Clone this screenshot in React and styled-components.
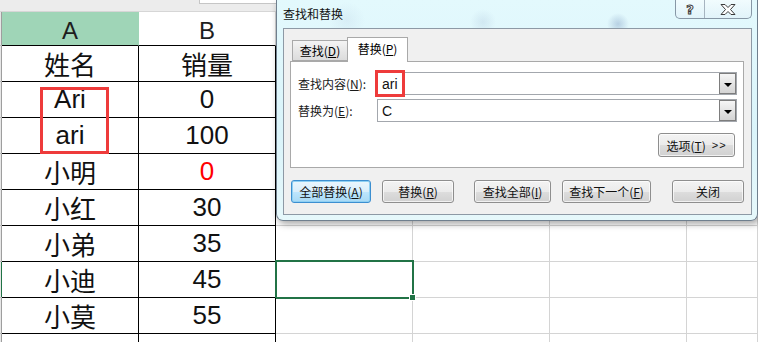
import styled, { createGlobalStyle } from "styled-components";

const GlobalStyle = createGlobalStyle`
  html, body {
    margin: 0;
    padding: 0;
    background: #ffffff;
    overflow: hidden;
  }
`;

const FONT = `"Liberation Sans", "Noto Sans CJK SC", sans-serif`;
const UI_FONT = `"Noto Sans CJK SC", "Liberation Sans", sans-serif`;

const Page = styled.div`
  position: relative;
  width: 758px;
  height: 342px;
  overflow: hidden;
  background: #ffffff;
  font-family: ${FONT};
`;

const TopStrip = styled.div`
  height: 12px;
  display: flex;
  background: #ececec;
  border-bottom: 1px solid #d6d6d6;
  box-sizing: border-box;

  .nameEdge {
    width: 199px;
  }
  .formula {
    flex: 1;
    height: 3px;
    background: #ffffff;
    border: 1px solid #c6c6c6;
    border-top: none;
  }
`;

const Sheet = styled.div`
  display: grid;
  grid-template-columns: 2px repeat(5, 137px) 1fr;
  grid-template-rows: 34px;
  grid-auto-rows: 36px;
`;

const RowHead = styled.div`
  background: #e6e6e6;
  border-bottom: 1px solid #bdbdbd;
  box-shadow: inset -1px 0 0 ${(p) => (p.$active ? "#217346" : "#9e9e9e")};
`;

const ColHead = styled.div`
  display: flex;
  align-items: center;
  justify-content: center;
  padding-top: 4px;
  box-sizing: border-box;
  font-size: 24px;
  color: #1e1e1e;
  background: ${(p) => (p.$selected ? "#9fd5b7" : "#ffffff")};
  border-right: 1px solid ${(p) => (p.$selected ? "#9fd5b7" : "#d4d4d4")};
  border-bottom: 1px solid ${(p) => (p.$table ? "#000000" : "#d4d4d4")};
`;

const Cell = styled.div`
  position: relative;
  display: flex;
  align-items: center;
  justify-content: center;
  font-size: 26px;
  color: ${(p) => (p.$red ? "#ff0000" : "#111111")};
  border-right: 1px solid ${(p) => (p.$table ? "#000000" : "#d4d4d4")};
  border-bottom: 1px solid ${(p) => (p.$table ? "#000000" : "#d4d4d4")};

  ${(p) =>
    p.$current &&
    `
    &::after {
      content: "";
      position: absolute;
      top: -2px;
      left: -1px;
      right: -2px;
      bottom: -2px;
      border: 2px solid #217346;
    }
    &::before {
      content: "";
      position: absolute;
      right: -4px;
      bottom: -4px;
      width: 5px;
      height: 5px;
      background: #217346;
      border: 1px solid #ffffff;
      z-index: 1;
    }
  `}
`;

const Mark = styled.div`
  position: absolute;
  left: ${(p) => p.$x}px;
  top: ${(p) => p.$y}px;
  width: ${(p) => p.$w}px;
  height: ${(p) => p.$h}px;
  border: 3px solid #ee3b3b;
  box-sizing: border-box;
  z-index: 5;
`;

const Dialog = styled.div`
  position: absolute;
  left: 276px;
  top: 0;
  width: 482px;
  height: 221px;
  box-sizing: border-box;
  padding: 0 5px 5px 6px;
  display: flex;
  flex-direction: column;
  font-family: ${UI_FONT};
  font-size: 12px;
  color: #000000;
  border: 1px solid #6f7f8e;
  border-top: none;
  border-radius: 0 0 7px 7px;
  background:
    radial-gradient(circle at 341px 24px, rgba(120, 150, 190, 0.4) 0, rgba(120, 150, 190, 0) 11px),
    radial-gradient(circle at 206px 22px, rgba(150, 175, 205, 0.22) 0, rgba(150, 175, 205, 0) 13px),
    radial-gradient(circle at 70px 20px, rgba(170, 190, 215, 0.18) 0, rgba(170, 190, 215, 0) 18px),
    linear-gradient(180deg, #e3f9fd 0%, #daf4fa 60%, #e6f8fb 100%);
  box-shadow: 2px 3px 7px rgba(0, 0, 0, 0.35);
  z-index: 3;
`;

const TitleBar = styled.div`
  height: 28px;
  display: flex;
  align-items: center;
  padding-bottom: 1px;
  box-sizing: border-box;
  font-size: 12px;
  color: #111111;
`;

const Caption = styled.div`
  position: absolute;
  right: 5px;
  top: 0;
  display: flex;
  height: 18px;
  border: 1px solid #8797a6;
  border-top: none;
  border-radius: 0 0 5px 5px;
  background: linear-gradient(180deg, rgba(255, 255, 255, 0.5), rgba(225, 240, 248, 0.6));
  overflow: hidden;
`;

const CaptionButton = styled.div`
  width: ${(p) => p.$w}px;
  display: flex;
  align-items: center;
  justify-content: center;
  & + & {
    border-left: 1px solid #a6b4c0;
  }
`;

const HelpGlyph = styled.span`
  font-family: "DejaVu Sans", sans-serif;
  font-weight: bold;
  font-size: 13px;
  color: #ffffff;
  -webkit-text-stroke: 1px #3b3b3b;
  line-height: 1;
`;

const Client = styled.div`
  flex: 1;
  display: flex;
  flex-direction: column;
  background: #f0f0f0;
  border: 1px solid #8d99a5;
`;

const TabStrip = styled.div`
  display: flex;
  align-items: flex-end;
  height: 24px;
  margin: 8px 0 0 8px;
  position: relative;
  z-index: 1;
`;

const Tab = styled.div`
  box-sizing: border-box;
  display: flex;
  align-items: center;
  justify-content: center;
  width: ${(p) => (p.$active ? 61 : 56)}px;
  height: ${(p) => (p.$active ? 25 : 21)}px;
  margin-bottom: ${(p) => (p.$active ? -1 : 0)}px;
  margin-left: ${(p) => (p.$active ? -1 : 0)}px;
  padding-bottom: ${(p) => (p.$active ? 3 : 0)}px;
  border: 1px solid #a9a9a9;
  border-bottom: ${(p) => (p.$active ? "none" : "1px solid #a9a9a9")};
  background: ${(p) =>
    p.$active ? "#ffffff" : "linear-gradient(180deg, #f4f4f4 0%, #e6e6e6 55%, #dcdcdc 100%)"};
  font-size: 12px;
`;

const Panel = styled.div`
  height: 107px;
  box-sizing: border-box;
  margin: 0 7px 0 6px;
  padding: 10px 7px 0 7px;
  background: #ffffff;
  border: 1px solid #a9a9a9;
`;

const Form = styled.div`
  display: grid;
  grid-template-columns: 79px 360px;
  grid-auto-rows: 23px;
  row-gap: 4px;
  align-items: center;
`;

const Label = styled.div`
  font-size: 12px;
  color: #1a1a1a;
`;

const Field = styled.div`
  height: 23px;
  box-sizing: border-box;
  display: flex;
  align-items: center;
  border: 1px solid #a3a7ad;
  background: #ffffff;

  .value {
    flex: 1;
    padding-left: 4px;
    font-family: ${FONT};
    font-size: 14px;
    color: #111111;
  }
`;

const DropButton = styled.div`
  width: 17px;
  height: 21px;
  box-sizing: border-box;
  display: flex;
  align-items: center;
  justify-content: center;
  border: 1px solid #7d7d7d;
  background: linear-gradient(180deg, #f6f6f6 0%, #e4e4e4 50%, #d4d4d4 100%);

  &::after {
    content: "";
    border-left: 4px solid transparent;
    border-right: 4px solid transparent;
    border-top: 4px solid #000000;
    margin-top: 2px;
  }
`;

const OptionRow = styled.div`
  display: flex;
  justify-content: flex-end;
  margin-top: 11px;
  padding-right: 1px;
`;

const ButtonRow = styled.div`
  display: flex;
  margin: 12px 0 0 7px;
`;

const Button = styled.div`
  width: ${(p) => p.$w}px;
  height: ${(p) => p.$h || 23}px;
  margin-left: ${(p) => p.$ml || 0}px;
  box-sizing: border-box;
  display: flex;
  align-items: center;
  justify-content: center;
  font-size: 12px;
  color: #111111;
  border-radius: 3px;
  border: 1px solid ${(p) => (p.$focus ? "#3c8fd0" : "#8e8e8e")};
  background: ${(p) =>
    p.$focus
      ? "linear-gradient(180deg, #eaf6fd 0%, #d9eefb 50%, #bee6fd 51%, #a7d9f5 100%)"
      : "linear-gradient(180deg, #f3f3f3 0%, #ebebeb 50%, #dddddd 51%, #d1d1d1 100%)"};
  box-shadow: ${(p) =>
    p.$focus ? "inset 0 0 0 1px #8fd0f3" : "inset 0 0 0 1px rgba(255,255,255,0.7)"};

  .extra {
    font-family: ${FONT};
    font-size: 11px;
    margin-left: 6px;
    letter-spacing: 1px;
  }
`;

const rows = [
  { name: "姓名", value: "销量" },
  { name: "Ari", value: "0" },
  { name: "ari", value: "100" },
  { name: "小明", value: "0", red: true },
  { name: "小红", value: "30" },
  { name: "小弟", value: "35" },
  { name: "小迪", value: "45", active: true },
  { name: "小莫", value: "55" },
];

function CloseGlyph() {
  return (
    <svg width="18" height="11" viewBox="0 0 18 11">
      <path
        d="M2 0.5 H6 L9 3.5 L12 0.5 H16 L11.5 5.5 L16 10.5 H12 L9 7.5 L6 10.5 H2 L6.5 5.5 Z"
        fill="#ffffff"
        stroke="#3b3b3b"
        strokeWidth="1"
        strokeLinejoin="round"
      />
    </svg>
  );
}

function Row({ row }) {
  return (
    <>
      <RowHead $active={row.active} />
      <Cell $table>{row.name}</Cell>
      <Cell $table $red={row.red}>
        {row.value}
      </Cell>
      <Cell $current={row.active} />
      <Cell />
      <Cell />
      <Cell />
    </>
  );
}

export default function App() {
  return (
    <Page>
      <GlobalStyle />
      <TopStrip>
        <div className="nameEdge" />
        <div className="formula" />
      </TopStrip>
      <Sheet>
        <RowHead />
        <ColHead $selected $table>
          A
        </ColHead>
        <ColHead $table>B</ColHead>
        {/* C to F headers sit under the dialog */}
        <ColHead />
        <ColHead />
        <ColHead />
        <ColHead />
        {rows.map((row) => (
          <Row key={row.name} row={row} />
        ))}
        <Row row={{ name: "", value: "" }} />
      </Sheet>

      <Mark $x={40} $y={87} $w={69} $h={67} />

      <Dialog>
        <TitleBar>查找和替换</TitleBar>
        <Caption>
          <CaptionButton $w={28}>
            <HelpGlyph>?</HelpGlyph>
          </CaptionButton>
          <CaptionButton $w={46}>
            <CloseGlyph />
          </CaptionButton>
        </Caption>
        <Client>
          <TabStrip>
            <Tab>
              查找(<u>D</u>)
            </Tab>
            <Tab $active>
              替换(<u>P</u>)
            </Tab>
          </TabStrip>
          <Panel>
            <Form>
              <Label>
                查找内容(<u>N</u>):
              </Label>
              <Field>
                <span className="value">ari</span>
                <DropButton />
              </Field>
              <Label>
                替换为(<u>E</u>):
              </Label>
              <Field>
                <span className="value">C</span>
                <DropButton />
              </Field>
            </Form>
            <OptionRow>
              <Button $w={77} $h={24}>
                选项(<u>T</u>)<span className="extra">&gt;&gt;</span>
              </Button>
            </OptionRow>
          </Panel>
          <ButtonRow>
            <Button $w={80} $focus>
              全部替换(<u>A</u>)
            </Button>
            <Button $w={72} $ml={11}>
              替换(<u>R</u>)
            </Button>
            <Button $w={77} $ml={20}>
              查找全部(<u>I</u>)
            </Button>
            <Button $w={89} $ml={11}>
              查找下一个(<u>F</u>)
            </Button>
            <Button $w={72} $ml={21}>
              关闭
            </Button>
          </ButtonRow>
        </Client>
      </Dialog>

      <Mark $x={375} $y={70} $w={30} $h={27} />
    </Page>
  );
}
